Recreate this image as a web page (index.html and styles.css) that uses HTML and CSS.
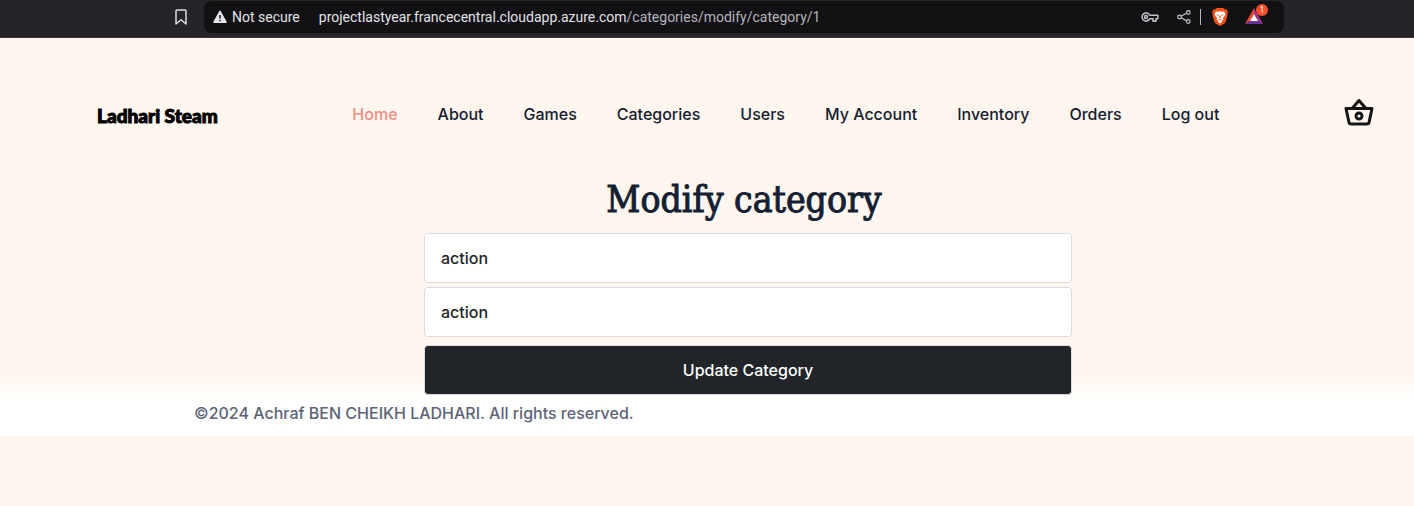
FILE: index.html
```html
<!DOCTYPE html>
<html lang="en">
<head>
<meta charset="utf-8">
<title>Modify category</title>
<link rel="stylesheet" href="styles.css">
</head>
<body>
<div class="browser-bar">
  <button class="icon-button bookmark" type="button" aria-label="Bookmark">
    <svg width="14" height="18" viewBox="0 0 14 18" fill="none" stroke="#dcdce2" stroke-width="1.5" stroke-linejoin="round"><path d="M3 2h8q1 0 1 1v13l-5-4.200L2 16V3q0-1 1-1z"/></svg>
  </button>
  <div class="address">
    <svg class="warning" width="14" height="14" viewBox="0 0 14 14"><path d="M7 1.300L13 12.200H1z" fill="#e6e6ea" stroke="#e6e6ea" stroke-width="1.500" stroke-linejoin="round"/><path d="M7 5v3.500M7 9.800v1.500" stroke="#111113" stroke-width="1.500"/></svg>
    <span class="security">Not secure</span>
    <span class="url">projectlastyear.francecentral.cloudapp.azure.com<span class="path">/categories/modify/category/1</span></span>
    <div class="tools">
      <button class="icon-button" type="button" aria-label="Passwords">
        <svg width="18" height="12" viewBox="0 0 18 12" fill="none" stroke="#c3c3ca" stroke-width="1.500" stroke-linejoin="round"><path d="M8.600 4.200A4 4 0 1 0 8.600 7.800H12v2.500h3V7.800h1.800V4.200z"/><circle cx="5" cy="6" r="1.500"/></svg>
      </button>
      <button class="icon-button share" type="button" aria-label="Share">
        <svg width="14" height="14" viewBox="0 0 14 14" fill="none" stroke="#c3c3ca" stroke-width="1.200"><path d="M4 6.200l5.500-3M4 7.800l5.500 3"/><circle cx="2.500" cy="7" r="1.800"/><circle cx="11.300" cy="2.500" r="1.800"/><circle cx="11.300" cy="11.500" r="1.800"/></svg>
      </button>
      <span class="divider"></span>
      <button class="icon-button shields" type="button" aria-label="Shields">
        <svg width="16" height="18" viewBox="0 0 16 18"><path d="M4.500 0h7l1.500 1.500 1.500-.2L16 4l-.7 1.500.3 1-2 7.500q-.5 1.500-5.600 4Q3 15.500 2.400 14L.4 6.500l.3-1L0 4l1.500-2.700 1.500.2z" fill="#fb5018"/><path d="M4 3.500l2 .2 2-.5 2 .5 2-.2 1.300 2.300-.4 1.800-2 2.400.6 1.800-2.200 1.200.7.700L8 15.500 6 13.700l.7-.7-2.200-1.200.6-1.800-2-2.400-.4-1.800z" fill="#fff"/><path d="M4.500 6l2.300 1-.5 1.200zM11.500 6l-2.300 1 .5 1.200zM8 7l.9 2.700-.9.800-.9-.8zM6 11.200l2 1.200 2-1.200" fill="#fb5018"/></svg>
      </button>
      <button class="icon-button rewards" type="button" aria-label="Rewards">
        <svg width="24" height="22" viewBox="0 0 24 22"><path d="M10 4L1 20l5-3 4-7z" fill="#f5482a"/><path d="M10 4l9 16-5-3-4-7z" fill="#a93389"/><path d="M1 20h18l-5-3.500H6z" fill="#663399"/><path d="M10 10l4 7H6z" fill="#fff"/></svg>
        <span class="badge">1</span>
      </button>
    </div>
  </div>
</div>
<div class="page">
  <header class="header">
    <a class="logo" href="#">Ladhari Steam</a>
    <nav class="nav">
      <a class="active" href="#">Home</a>
      <a href="#">About</a>
      <a href="#">Games</a>
      <a href="#">Categories</a>
      <a href="#">Users</a>
      <a href="#">My Account</a>
      <a href="#">Inventory</a>
      <a href="#">Orders</a>
      <a href="#">Log out</a>
    </nav>
    <a class="basket" href="#" aria-label="Basket">
      <svg width="30" height="28" viewBox="0 0 30 28" fill="none" stroke="#161616" stroke-width="3" stroke-linejoin="round"><path d="M2 10.500h26l-3 14q-.4 1.500-2 1.500H7q-1.600 0-2-1.500z"/><path d="M8.500 10L15 2.500 21.500 10"/><circle cx="15" cy="18" r="3"/></svg>
    </a>
  </header>
  <main class="main">
    <form class="form">
      <h1 class="title">Modify category</h1>
      <input class="field" type="text" value="action" aria-label="Category name">
      <input class="field" type="text" value="action" aria-label="Category description">
      <button class="submit" type="button">Update Category</button>
    </form>
  </main>
  <footer class="footer">©2024 Achraf BEN CHEIKH LADHARI. All rights reserved.</footer>
</div>
</body>
</html>
```
FILE: styles.css
```css
* {
  box-sizing: border-box;
}

body {
  margin: 0;
  background: #fff6ef;
  color: #212529;
  font-family: Inter, "Liberation Sans", sans-serif;
  font-size: 16px;
  font-weight: 500;
  line-height: 24px;
}

a {
  color: inherit;
  text-decoration: none;
}

svg {
  display: block;
}

.browser-bar {
  display: flex;
  align-items: flex-start;
  gap: 16px;
  height: 38px;
  padding: 1px 130px 0 174px;
  background: #252429;
  border-bottom: 1px solid #37363b;
}

.icon-button {
  position: relative;
  padding: 0;
  border: 0;
  background: none;
}

.bookmark {
  margin-top: 7px;
}

.address {
  display: flex;
  flex: 1;
  align-items: center;
  height: 32px;
  padding: 0 16px 0 9px;
  border-radius: 8px;
  background: #111113;
  color: #e3e3e8;
  font-family: Roboto, sans-serif;
  font-size: 14px;
  font-weight: 400;
}

.security {
  margin: 0 19px 0 5px;
  white-space: nowrap;
}

.url {
  white-space: nowrap;
}

.path {
  color: #b5b5bc;
}

.tools {
  display: flex;
  align-items: center;
  margin-left: auto;
}

.share {
  margin: 0 9px 0 18px;
}

.divider {
  width: 1px;
  height: 16px;
  background: #b8b8be;
}

.shields {
  margin: 0 16px 0 11px;
}

.rewards {
  margin-top: -4px;
}

.badge {
  position: absolute;
  top: 0;
  right: 0;
  width: 12px;
  height: 12px;
  border-radius: 6px;
  background: #fc4f2b;
  color: #fff;
  font-family: "Noto Sans", sans-serif;
  font-size: 8px;
  line-height: 12px;
  text-align: center;
}

.page {
  background: linear-gradient(to top, #fff 36px, #fff6ef 56px);
}

.header {
  display: flex;
  align-items: center;
  justify-content: space-between;
  padding: 56px 40px 0 97px;
}

.logo {
  padding-top: 8px;
  color: #000;
  font-family: Lato, sans-serif;
  font-size: 19px;
  font-weight: 900;
  line-height: 28px;
  -webkit-text-stroke: 1px #000;
}

.nav {
  display: flex;
  gap: 40px;
  padding: 4px 0 0 10px;
  color: #141c30;
  white-space: nowrap;
}

.nav .active {
  color: #f18d82;
}

.main {
  padding: 46px 0 0 82px;
}

.form {
  display: flex;
  flex-direction: column;
  gap: 4px;
  max-width: 648px;
  margin: 0 auto;
}

.title {
  margin: 0 8px 5px 0;
  color: #141f35;
  font-family: "DejaVu Serif Condensed", "DejaVu Serif", serif;
  font-size: 37px;
  font-weight: 400;
  line-height: 48px;
  text-align: center;
  -webkit-text-stroke: 1px #141f35;
}

.field,
.submit {
  width: 100%;
  height: 50px;
  padding: 0 16px;
  border: 1px solid #dcdcde;
  border-radius: 4px;
  font: inherit;
}

.field {
  background: #fff;
  color: #212529;
}

.submit {
  margin-top: 4px;
  background: #212529;
  color: #fff;
}

.footer {
  padding: 6px 194px 11px;
  color: #5c6476;
}
```
